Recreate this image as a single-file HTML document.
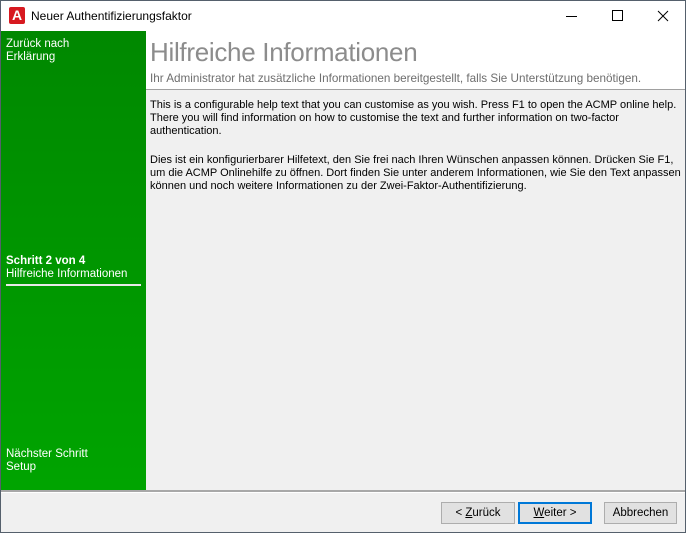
<!DOCTYPE html>
<html><head><meta charset="utf-8"><style>
body{margin:0;width:686px;height:533px;overflow:hidden;font-family:"Liberation Sans",sans-serif;}
.win{position:absolute;left:0;top:0;width:684px;height:531px;border:1px solid #55606c;background:#f0f0f0;}
.title{position:absolute;left:0;top:0;width:684px;height:30px;background:#fff;}
.title .t{position:absolute;left:30px;top:8px;font-size:12px;color:#000;}
.logo{position:absolute;left:8px;top:6px;width:16px;height:17px;background:#d71920;border-radius:2px;color:#fff;font-weight:bold;font-size:14px;text-align:center;line-height:16px;}
.green{position:absolute;left:0;top:30px;width:145px;height:459px;background:linear-gradient(#008800,#00a400);color:#fff;font-size:11.5px;line-height:13px;}
.green div{position:absolute;left:5px;white-space:nowrap;}
.hdr{position:absolute;left:145px;top:30px;width:539px;height:58px;background:#fff;border-bottom:1px solid #a0a0a0;}
.h1{position:absolute;left:4px;top:6px;font-size:26px;color:#8c8c8c;letter-spacing:-0.3px;white-space:nowrap;}
.sub{position:absolute;left:4px;top:41px;font-size:11.7px;color:#6e6e6e;white-space:nowrap;}
.content{position:absolute;left:149px;top:98px;width:535px;font-size:11px;line-height:13px;color:#000;white-space:nowrap;}
.content p{margin:0 0 16px 0;}
.bot{position:absolute;left:0;top:489px;width:684px;border-top:2px solid #a8a8a8;border-bottom:1px solid #fff;}
.btn{position:absolute;top:501px;height:22px;background:#e1e1e1;border:1px solid #adadad;font-size:11.5px;text-align:center;line-height:20px;box-sizing:border-box;}
</style></head><body>
<div class="win">
<div class="title"><div class="logo">A</div><div class="t">Neuer Authentifizierungsfaktor</div>
<svg style="position:absolute;left:560px;top:8px" width="120" height="14"><line x1="5" y1="7.5" x2="16" y2="7.5" stroke="#000"/><rect x="51.5" y="1.5" width="10" height="10" fill="none" stroke="#000"/><path d="M97 2L107 12M107 2L97 12" stroke="#000"/></svg></div>
<div class="green">
<div style="top:7px">Zurück nach<br>Erklärung</div>
<div style="top:224px;font-weight:bold">Schritt 2 von 4</div>
<div style="top:237px">Hilfreiche Informationen</div>
<div style="top:253px;width:135px;height:2px;background:#e8e8e8"></div>
<div style="top:417px">Nächster Schritt<br>Setup</div>
</div>
<div class="hdr"><div class="h1">Hilfreiche Informationen</div><div class="sub">Ihr Administrator hat zusätzliche Informationen bereitgestellt, falls Sie Unterstützung benötigen.</div></div>
<div class="content"><p>This is a configurable help text that you can customise as you wish. Press F1 to open the ACMP online help.<br>There you will find information on how to customise the text and further information on two-factor<br>authentication.</p><p>Dies ist ein konfigurierbarer Hilfetext, den Sie frei nach Ihren Wünschen anpassen können. Drücken Sie F1,<br>um die ACMP Onlinehilfe zu öffnen. Dort finden Sie unter anderem Informationen, wie Sie den Text anpassen<br>können und noch weitere Informationen zu der Zwei-Faktor-Authentifizierung.</p></div>
<div class="bot"></div>
<div class="btn" style="left:440px;width:74px">&lt; <u>Z</u>urück</div>
<div class="btn" style="left:517px;width:74px;border:2px solid #0078d7;line-height:18px"><u>W</u>eiter &gt;</div>
<div class="btn" style="left:603px;width:73px">Abbrechen</div>
</div>
</body></html>
